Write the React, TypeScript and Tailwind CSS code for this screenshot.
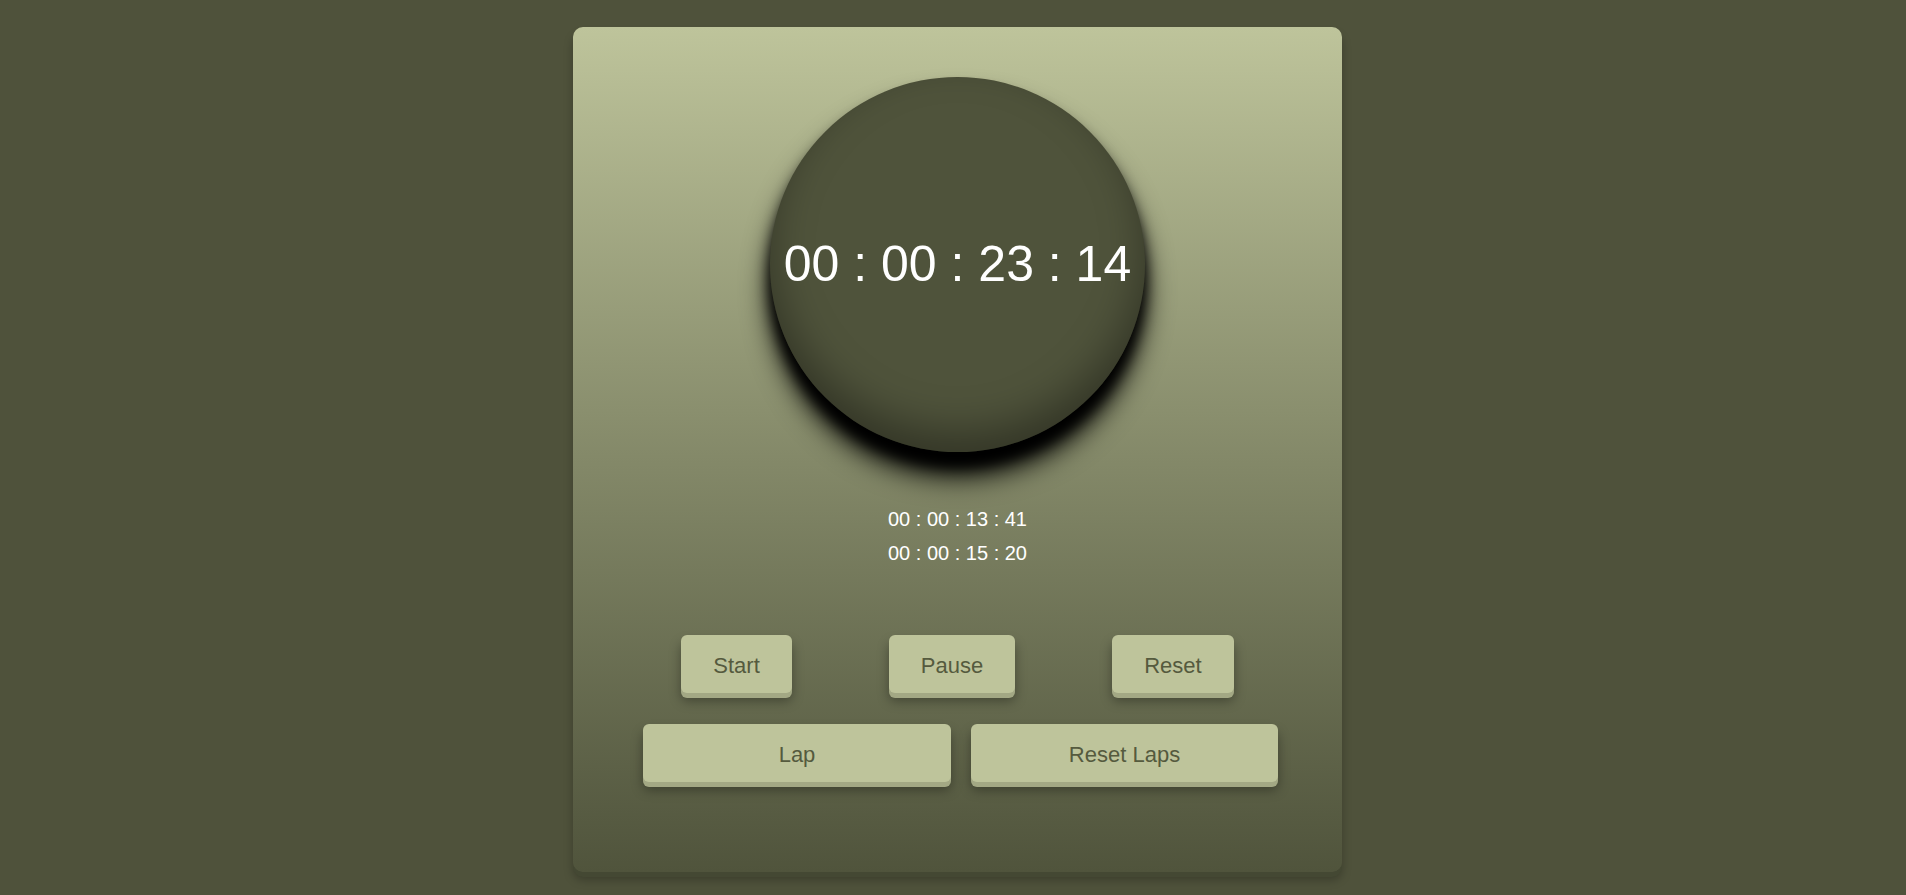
import React from "react";

const btn =
  "flex items-center justify-center h-[58px] pt-[3px] rounded-[6px] bg-[#bec49b] text-[#555a3e] text-[22px] leading-none shadow-[0_5px_0_#a3a884,0_8px_12px_rgba(0,0,0,0.35)]";

export default function App() {
  return (
    <div
      className="w-full h-[895px] bg-[#4f523b] flex justify-center pl-[9px] pt-[27px]"
      style={{ fontFamily: '"Liberation Sans", Arial, sans-serif' }}
    >
      <div className="w-[769px] h-[845px] rounded-[10px] bg-gradient-to-b from-[#bec49b] to-[#50543c] shadow-[0_5px_0_#444833,0_8px_10px_rgba(0,0,0,0.25)] flex flex-col items-center pt-[50px]">
        <div className="w-[375px] h-[375px] rounded-full bg-[#4f533b] flex items-center justify-center shadow-[0_24px_28px_#000,0_14px_14px_#000,inset_0_-20px_40px_rgba(0,0,0,0.35)]">
          <span className="text-white text-[50px] leading-none whitespace-nowrap -mt-[2px]">
            00 : 00 : 23 : 14
          </span>
        </div>
        <div className="mt-[50px] flex flex-col items-center text-white text-[20px] leading-[34px]">
          <div>00 : 00 : 13 : 41</div>
          <div>00 : 00 : 15 : 20</div>
        </div>
        <div className="mt-[65px] flex gap-[97px]">
          <button className={btn + " px-8"}>Start</button>
          <button className={btn + " px-8"}>Pause</button>
          <button className={btn + " px-8"}>Reset</button>
        </div>
        <div className="mt-[31px] flex gap-[20px] ml-[6px]">
          <button className={btn + " w-[308px]"}>Lap</button>
          <button className={btn + " w-[307px]"}>Reset Laps</button>
        </div>
      </div>
    </div>
  );
}
